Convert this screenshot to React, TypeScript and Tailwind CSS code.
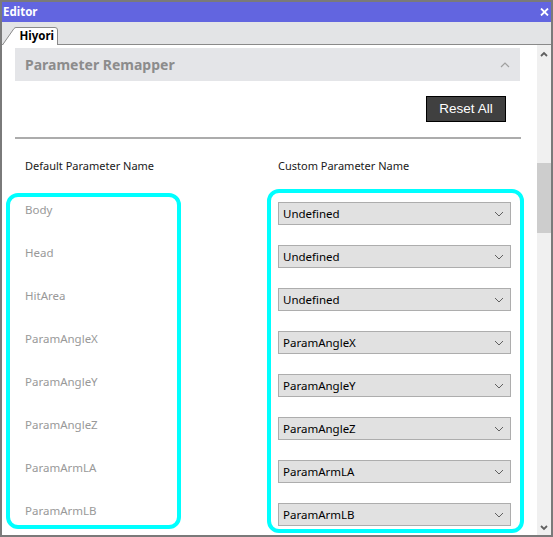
const defaults = ['Body', 'Head', 'HitArea', 'ParamAngleX', 'ParamAngleY', 'ParamAngleZ', 'ParamArmLA', 'ParamArmLB'];
const customs = ['Undefined', 'Undefined', 'Undefined', 'ParamAngleX', 'ParamAngleY', 'ParamAngleZ', 'ParamArmLA', 'ParamArmLB'];

function Select({ value }: { value: string }) {
  return (
    <div className="flex h-[23px] w-[233px] items-center justify-between border border-[#adadad] bg-[#e1e1e1] pl-[4px] pr-[6px]">
      <span className="text-[11.5px] leading-none text-[#000]">{value}</span>
      <svg width="10" height="6" viewBox="0 0 10 6" fill="none">
        <path d="M1 1L5 5L9 1" stroke="#606060" strokeWidth="1" />
      </svg>
    </div>
  );
}

export default function App() {
  return (
    <div className="flex h-[537px] w-[553px] flex-col overflow-hidden border-2 border-[#7a7a7a] bg-white font-['Noto_Sans',sans-serif]">
      {/* title bar */}
      <div className="flex h-[20px] shrink-0 items-center justify-between bg-[#6265e0] pl-[1px] pr-[2px]">
        <span className="text-[11.5px] font-bold text-white">Editor</span>
        <svg width="9" height="8" viewBox="0 0 9 8" fill="none">
          <path d="M1 0.5L8 7.5M8 0.5L1 7.5" stroke="white" strokeWidth="1.8" />
        </svg>
      </div>

      {/* tab strip */}
      <div className="flex h-[23px] shrink-0 items-end border-b border-[#8a8a8a] bg-[#e3e4e6]">
        <div className="relative -mb-px flex h-[19px] w-[57px] items-center justify-end pr-[5px]">
          <svg className="absolute inset-0" width="57" height="19" viewBox="0 0 57 19" fill="none">
            <path d="M0.5 19L12 2.5Q13 1.5 14 1.5L53 1.5Q55.5 1.5 55.5 4L55.5 19" fill="white" stroke="#8a8a8a" strokeWidth="1" />
          </svg>
          <span className="relative text-[11.5px] font-bold leading-none text-black">Hiyori</span>
        </div>
      </div>

      {/* body */}
      <div className="flex min-h-0 flex-1">
        <div className="flex min-w-0 flex-1 flex-col">
          <div className="ml-[13px] mt-[3px] flex h-[33px] w-[505px] items-center justify-between bg-[#e4e5e8] pl-[10px] pr-[10px]">
            <span className="text-[14px] font-bold text-[#8c8c8c]">Parameter Remapper</span>
            <svg width="10" height="6" viewBox="0 0 10 6" fill="none">
              <path d="M1 5L5 1L9 5" stroke="#a0a0a0" strokeWidth="1.2" />
            </svg>
          </div>

          <div className="mt-[15px] flex justify-end pr-[31px]">
            <button className="flex h-[26px] w-[80px] items-center justify-center border border-black bg-[#404040] font-['Liberation_Sans',sans-serif] text-[13.5px] text-white">
              Reset All
            </button>
          </div>

          <div className="ml-[13px] mt-[15px] h-[2px] w-[506px] bg-[#acacac]" />

          <div className="mt-[19px] flex h-[16px] items-center text-[11px] text-[#1a1a1a]">
            <span className="ml-[23px] w-[253px]">Default Parameter Name</span>
            <span>Custom Parameter Name</span>
          </div>

          <div className="mt-[15px] flex items-start">
            <div className="ml-[4px] mt-[4px] flex w-[175px] flex-col gap-[27px] rounded-[12px] border-4 border-[#00ffff] pb-[6px] pl-[15px] pt-[5px]">
              {defaults.map((d) => (
                <span key={d} className="h-[16px] text-[11.5px] leading-[16px] text-[#999999]">
                  {d}
                </span>
              ))}
            </div>
            <div className="ml-[86px] flex w-[257px] flex-col gap-[20px] rounded-[12px] border-4 border-[#00ffff] pb-[3px] pl-[7px] pt-[9px]">
              {customs.map((c, i) => (
                <Select key={i} value={c} />
              ))}
            </div>
          </div>
        </div>

        {/* scrollbar */}
        <div className="flex w-[14px] shrink-0 flex-col items-center bg-[#f0f0f0]">
          <svg className="mt-[6px]" width="8" height="6" viewBox="0 0 8 6" fill="none">
            <path d="M1 5L4 2L7 5" stroke="#606060" strokeWidth="1.8" />
          </svg>
          <div className="mt-[106px] h-[70px] w-full bg-[#cdcdcd]" />
          <div className="flex-1" />
          <svg className="mb-[4px]" width="8" height="6" viewBox="0 0 8 6" fill="none">
            <path d="M1 1L4 4L7 1" stroke="#606060" strokeWidth="1.8" />
          </svg>
        </div>
      </div>
    </div>
  );
}
